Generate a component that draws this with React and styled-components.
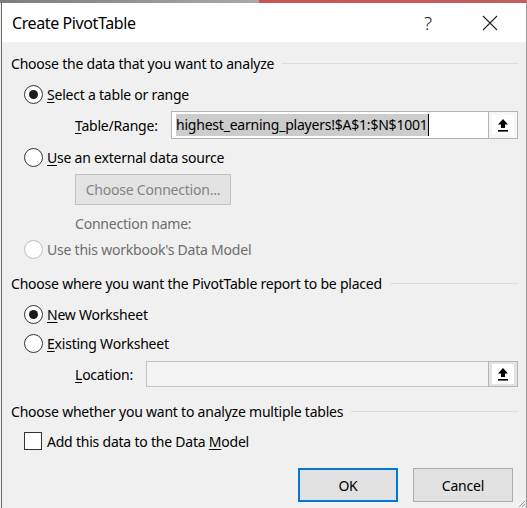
import React from "react";
import styled, { createGlobalStyle } from "styled-components";

const GlobalStyle = createGlobalStyle`
  html, body {
    margin: 0;
    padding: 0;
    background: #f0f0f0;
  }
  body {
    font-family: "Noto Sans", "Open Sans", sans-serif;
    font-size: 14px;
    letter-spacing: -0.22px;
    color: #000;
  }
`;

const Screen = styled.div`
  width: 527px;
  height: 508px;
  overflow: hidden;
  display: flex;
  flex-direction: column;
  background: #f0f0f0;
`;

const BackdropStrip = styled.div`
  height: 3px;
  flex-shrink: 0;
  background: linear-gradient(
    to right,
    #7d7d7d 0,
    #a9a9a9 258px,
    #c65454 260px,
    #c46060 527px
  );
`;

const Window = styled.div`
  flex: 1;
  display: flex;
  flex-direction: column;
  margin-left: 1px;
  border-left: 1px solid #6b6b6b;
  border-right: 1px solid #9a9a9a;
  position: relative;
`;

const TitleBar = styled.div`
  height: 39px;
  display: flex;
  align-items: center;
  background: #fff;
  padding-left: 10px;
  padding-right: 5px;
`;

const Title = styled.div`
  flex: 1;
  font-size: 16px;
  letter-spacing: -0.4px;
`;

const TitleButton = styled.div`
  width: 62px;
  height: 39px;
  display: flex;
  align-items: center;
  justify-content: center;
  font-size: 19px;
  font-weight: 300;
  color: #222;
`;

const Body = styled.div`
  display: flex;
  flex-direction: column;
  padding: 0 8px 0 9px;
`;

const SectionHeader = styled.div`
  height: 20px;
  margin-top: ${(p) => p.$mt}px;
  display: flex;
  align-items: center;
  gap: 8px;
  white-space: nowrap;

  &::after {
    content: "";
    flex: 1;
    height: 1px;
    background: #dcdcdc;
  }
`;

const Row = styled.div`
  height: ${(p) => p.$h || 20}px;
  margin-top: ${(p) => p.$mt}px;
  padding-left: ${(p) => p.$indent || 0}px;
  display: flex;
  align-items: center;
  color: ${(p) => (p.$disabled ? "#6d6d6d" : "#000")};
  white-space: nowrap;
`;

const Radio = styled.span`
  width: 19px;
  height: 19px;
  margin-left: 13px;
  margin-right: 4px;
  box-sizing: border-box;
  border-radius: 50%;
  border: 1px solid ${(p) => (p.$disabled ? "#bcbcbc" : "#333")};
  background: #fff;
  display: flex;
  align-items: center;
  justify-content: center;

  &::after {
    content: "";
    width: 9px;
    height: 9px;
    border-radius: 50%;
    background: ${(p) => (p.$checked ? "#1a1a1a" : "transparent")};
  }
`;

const Checkbox = styled.span`
  width: 18px;
  height: 18px;
  margin-left: 13px;
  margin-right: 5px;
  box-sizing: border-box;
  border: 1px solid #333;
  background: #fff;
`;

const Key = styled.span`
  text-decoration: underline;
  text-underline-offset: 2px;
`;

const FieldLabel = styled.span`
  width: ${(p) => p.$w}px;
  flex-shrink: 0;
`;

const RefInput = styled.div`
  width: ${(p) => p.$w}px;
  height: 100%;
  box-sizing: border-box;
  display: flex;
  align-items: center;
  padding-left: 4px;
  border: 1px solid ${(p) => (p.$disabled ? "#c3c3c3" : "#b4b4b4")};
  border-right: none;
  background: ${(p) => (p.$disabled ? "#f3f3f3" : "#fff")};
`;

const Selection = styled.span`
  background: #cccccc;
  padding: 1px 0 2px;
  border-right: 1px solid #000;
`;

const CollapseButton = styled.div`
  width: 30px;
  height: 100%;
  box-sizing: border-box;
  border: 1px solid #b4b4b4;
  background: ${(p) => (p.$disabled ? "#e3e3e3" : "#f7f7f7")};
  display: flex;
  align-items: center;
  justify-content: center;
`;

const CollapseFace = styled.div`
  width: 22px;
  height: 20px;
  background: #fff;
  display: flex;
  align-items: center;
  justify-content: center;
`;

const ConnectButton = styled.div`
  width: 156px;
  height: 31px;
  margin-top: 7px;
  margin-left: 64px;
  box-sizing: border-box;
  border: 1px solid #c2c2c2;
  background: #e3e3e3;
  color: #838383;
  display: flex;
  align-items: center;
  justify-content: center;
`;

const Footer = styled.div`
  margin-top: 17px;
  display: flex;
  justify-content: flex-end;
  gap: 15px;
  padding-right: 5px;
`;

const DialogButton = styled.div`
  width: 100px;
  height: 34px;
  box-sizing: border-box;
  border: ${(p) => (p.$primary ? "2px solid #0078d7" : "1px solid #adadad")};
  background: #e1e1e1;
  display: flex;
  align-items: center;
  justify-content: center;
`;

const Grip = styled.svg`
  position: absolute;
  right: 0;
  bottom: 0;
`;

function UpArrow() {
  return (
    <svg width="12" height="14" viewBox="0 0 12 14">
      <path d="M6 1 L11 6.5 H8 V10 H4 V6.5 H1 Z" fill="#000" />
      <rect x="1" y="12" width="10" height="1.6" fill="#000" />
    </svg>
  );
}

function CloseIcon() {
  return (
    <svg width="16" height="16" viewBox="0 0 16 16">
      <path d="M1 1 L15 15 M15 1 L1 15" stroke="#222" strokeWidth="1.1" />
    </svg>
  );
}

export default function App() {
  return (
    <Screen>
      <GlobalStyle />
      <BackdropStrip />
      <Window>
        <TitleBar>
          <Title>Create PivotTable</Title>
          <TitleButton>?</TitleButton>
          <TitleButton>
            <CloseIcon />
          </TitleButton>
        </TitleBar>
        <Body>
          <SectionHeader $mt={11}>Choose the data that you want to analyze</SectionHeader>
          <Row $mt={11}>
            <Radio $checked />
            <span>
              <Key>S</Key>elect a table or range
            </span>
          </Row>
          <Row $mt={7} $h={28} $indent={64}>
            <FieldLabel $w={96}>
              <Key>T</Key>able/Range:
            </FieldLabel>
            <RefInput $w={320}>
              <Selection>highest_earning_players!$A$1:$N$1001</Selection>
            </RefInput>
            <CollapseButton>
              <CollapseFace>
                <UpArrow />
              </CollapseFace>
            </CollapseButton>
          </Row>
          <Row $mt={8}>
            <Radio />
            <span>
              <Key>U</Key>se an external data source
            </span>
          </Row>
          <ConnectButton>Choose Connection...</ConnectButton>
          <Row $mt={8} $indent={64} $disabled>
            Connection name:
          </Row>
          <Row $mt={6} $disabled>
            <Radio $disabled />
            Use this workbook's Data Model
          </Row>
          <SectionHeader $mt={14}>
            Choose where you want the PivotTable report to be placed
          </SectionHeader>
          <Row $mt={11}>
            <Radio $checked />
            <span>
              <Key>N</Key>ew Worksheet
            </span>
          </Row>
          <Row $mt={9}>
            <Radio />
            <span>
              <Key>E</Key>xisting Worksheet
            </span>
          </Row>
          <Row $mt={8} $h={26} $indent={64}>
            <FieldLabel $w={71}>
              <Key>L</Key>ocation:
            </FieldLabel>
            <RefInput $w={345} $disabled />
            <CollapseButton $disabled>
              <CollapseFace>
                <UpArrow />
              </CollapseFace>
            </CollapseButton>
          </Row>
          <SectionHeader $mt={14}>
            Choose whether you want to analyze multiple tables
          </SectionHeader>
          <Row $mt={10}>
            <Checkbox />
            <span>
              Add this data to the Data <Key>M</Key>odel
            </span>
          </Row>
          <Footer>
            <DialogButton $primary>OK</DialogButton>
            <DialogButton>Cancel</DialogButton>
          </Footer>
        </Body>
        <Grip width="10" height="10" viewBox="0 0 10 10">
          <path d="M9 3 L3 9 M9 6 L6 9" stroke="#9a9a9a" strokeWidth="1" />
        </Grip>
      </Window>
    </Screen>
  );
}
